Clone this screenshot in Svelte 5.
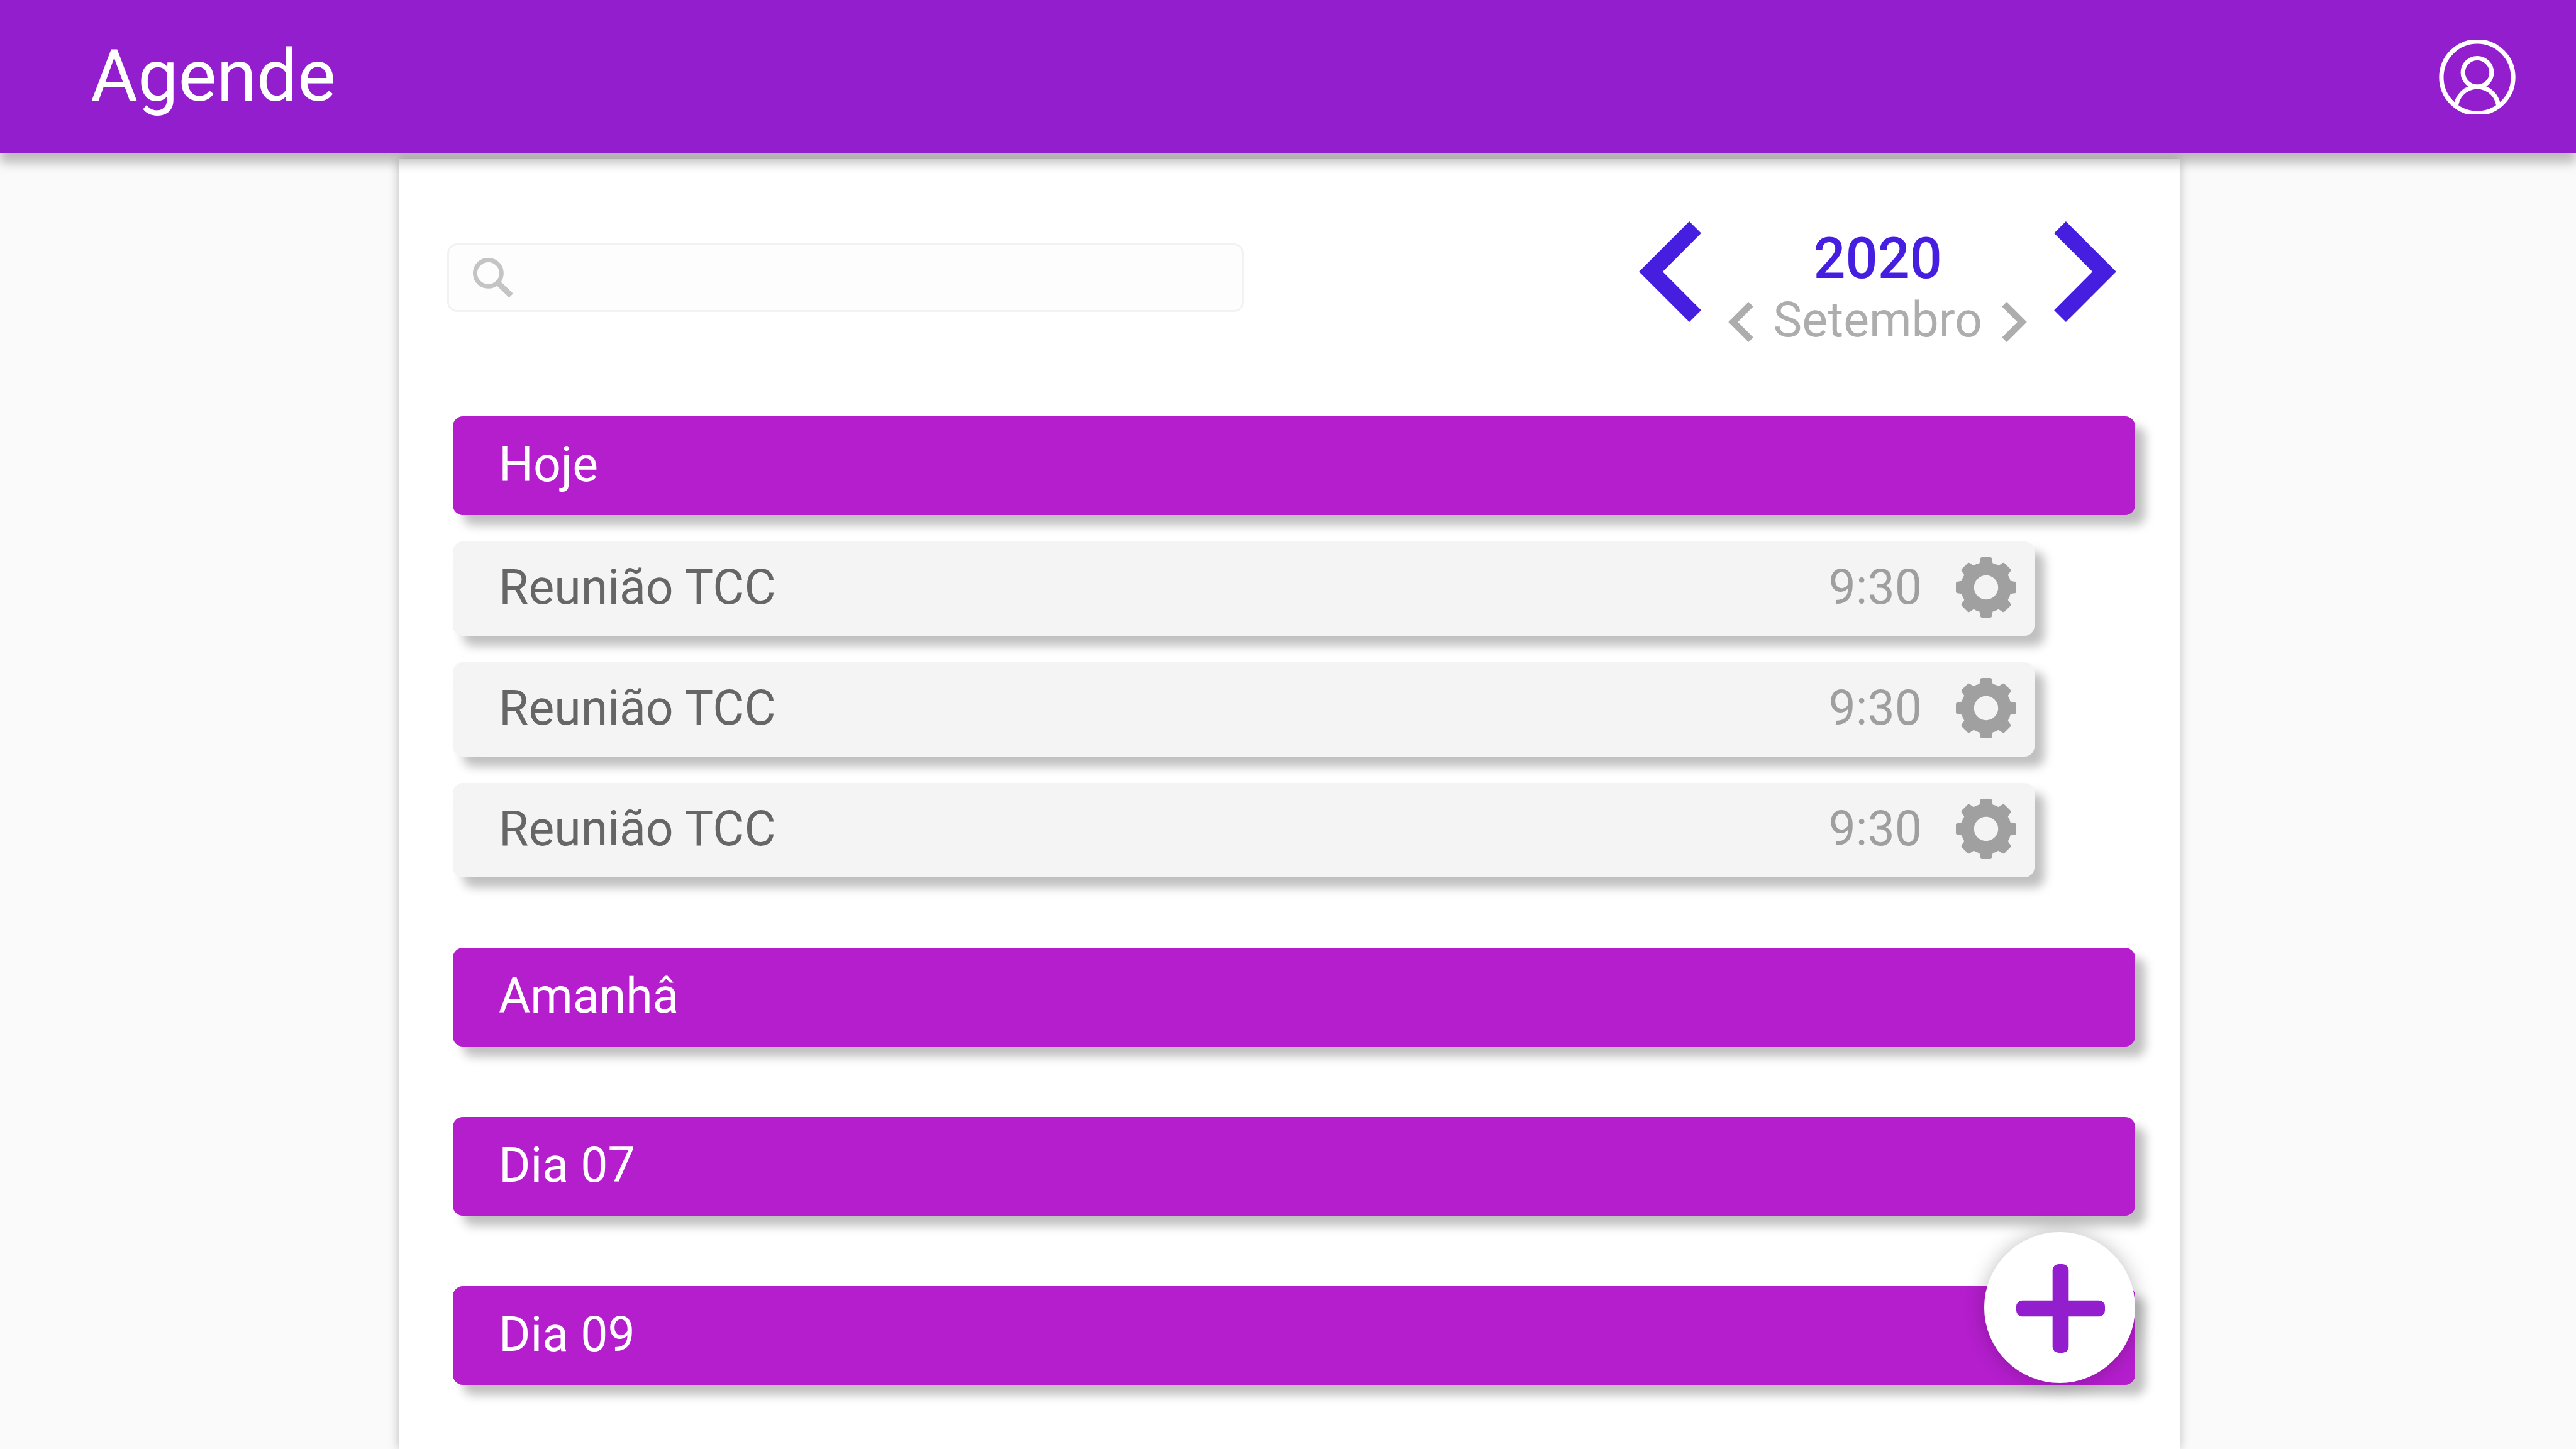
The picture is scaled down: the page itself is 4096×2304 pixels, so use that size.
<script lang="ts">
  const year = 2020;
  const month = 'Setembro';
  const days = [
    {
      label: 'Hoje',
      events: [
        { title: 'Reunião TCC', time: '9:30' },
        { title: 'Reunião TCC', time: '9:30' },
        { title: 'Reunião TCC', time: '9:30' }
      ]
    },
    { label: 'Amanhâ', events: [] },
    { label: 'Dia 07', events: [] },
    { label: 'Dia 09', events: [] }
  ];
  const teeth = [0, 45, 90, 135, 180, 225, 270, 315];
  let query = $state('');
</script>

{#snippet chevron(next: boolean)}
  <svg viewBox="0 0 7.41 12" aria-hidden="true">
    {#if next}
      <path d="M0 10.59 4.58 6 0 1.41 1.41 0l6 6-6 6z" />
    {:else}
      <path d="M7.41 1.41 6 0 0 6l6 6 1.41-1.41L2.83 6z" />
    {/if}
  </svg>
{/snippet}

<div class="page">
  <header class="topbar">
    <h1>Agende</h1>
    <button class="profile" aria-label="Perfil">
      <svg viewBox="0 0 152 148" aria-hidden="true">
        <clipPath id="badge"><circle cx="76" cy="74" r="72" /></clipPath>
        <circle cx="76" cy="74" r="71.6" />
        <circle cx="76" cy="64.3" r="28.6" />
        <circle cx="76" cy="135.3" r="42.4" clip-path="url(#badge)" />
      </svg>
    </button>
  </header>

  <main>
    <section class="panel">
      <div class="toolbar">
        <label class="search">
          <svg viewBox="0 0 80 80" aria-hidden="true">
            <circle cx="30.5" cy="30.5" r="26.2" stroke-width="8.7" />
            <path d="M50 50 76 75" stroke-width="11.2" />
          </svg>
          <input type="search" aria-label="Pesquisar" bind:value={query} />
        </label>

        <nav class="period" aria-label="Período">
          <button class="step year-step" aria-label="Ano anterior">{@render chevron(false)}</button>
          <div class="current">
            <strong>{year}</strong>
            <div class="month">
              <button class="step month-step" aria-label="Mês anterior">{@render chevron(false)}</button>
              <span>{month}</span>
              <button class="step month-step" aria-label="Próximo mês">{@render chevron(true)}</button>
            </div>
          </div>
          <button class="step year-step" aria-label="Próximo ano">{@render chevron(true)}</button>
        </nav>
      </div>

      <div class="days">
        {#each days as day}
          <section class="day">
            <h2>{day.label}</h2>
            {#if day.events.length}
              <ul>
                {#each day.events as event}
                  <li>
                    <span class="title">{event.title}</span>
                    <time>{event.time}</time>
                    <button class="settings" aria-label="Configurar evento">
                      <svg viewBox="0 0 120 120" aria-hidden="true">
                        <circle cx="60" cy="60" r="37" />
                        {#each teeth as angle}
                          <path
                            d="M46.5 14 48.3 4Q48.8 0 52 0H68Q71.2 0 71.7 4L73.5 14Z"
                            transform="rotate({angle} 60 60)"
                          />
                        {/each}
                      </svg>
                    </button>
                  </li>
                {/each}
              </ul>
            {/if}
          </section>
        {/each}
      </div>
    </section>
  </main>

  <button class="add" aria-label="Adicionar evento">
    <svg viewBox="0 0 176 176" aria-hidden="true">
      <rect x="72" width="32" height="176" rx="12" />
      <rect y="72" width="176" height="32" rx="12" />
    </svg>
  </button>
</div>

<style>
  :global(body) {
    margin: 0;
    background: #fafafa;
    font-family: Roboto, sans-serif;
  }

  .page,
  .page * {
    box-sizing: border-box;
  }

  .page {
    display: flex;
    flex-direction: column;
    min-height: 100vh;
  }

  h1,
  h2,
  ul {
    margin: 0;
    padding: 0;
    font-weight: 400;
    list-style: none;
  }

  button {
    flex: none;
    padding: 0;
    border: 0;
    background: none;
    cursor: pointer;
  }

  svg {
    display: block;
    width: 100%;
    height: 100%;
  }

  .topbar {
    position: relative;
    z-index: 1;
    display: flex;
    align-items: center;
    justify-content: space-between;
    height: 243px;
    padding: 2px 96px 0 144px;
    background: #921ecd;
    color: #fff;
    box-shadow: 0 16px 16px rgba(0, 0, 0, 0.25);
  }

  h1 {
    padding-bottom: 4px;
    font-size: 115px;
    line-height: 135px;
  }

  .profile {
    width: 122px;
    height: 118px;
  }

  .profile svg {
    fill: none;
    stroke: #fff;
    stroke-width: 9;
  }

  main {
    display: flex;
    flex: 1;
    padding: 10px 630px 0 634px;
  }

  .panel {
    flex: 1;
    padding-top: 99px;
    background: #fff;
    box-shadow: 0 0 16px rgba(0, 0, 0, 0.25);
  }

  .toolbar {
    display: flex;
    align-items: flex-start;
    justify-content: space-between;
    padding: 0 101px 0 77px;
  }

  .search {
    display: flex;
    align-items: center;
    flex: 0 1 1267px;
    height: 109px;
    margin-top: 35px;
    padding: 0 38px;
    border: 3px solid #f2f2f2;
    border-radius: 16px;
    background: #fdfdfd;
  }

  .search svg {
    flex: none;
    width: 64px;
    height: 64px;
    fill: none;
    stroke: #c4c4c4;
  }

  .search input {
    flex: 1;
    min-width: 0;
    margin-left: 32px;
    border: 0;
    outline: 0;
    background: none;
    color: #666;
    font: 400 58px Roboto, sans-serif;
  }

  .period {
    display: flex;
    align-items: flex-start;
    gap: 43px;
  }

  .step svg {
    fill: currentColor;
  }

  .year-step {
    width: 99px;
    height: 160px;
    color: #451ee0;
  }

  .month-step {
    width: 40px;
    height: 64px;
    color: #adadad;
  }

  .current {
    padding-top: 5px;
    text-align: center;
  }

  .current strong {
    display: block;
    color: #451ee0;
    font-size: 90px;
    font-weight: 500;
    line-height: 109px;
  }

  .month {
    display: flex;
    align-items: center;
    gap: 31px;
    color: #adadad;
    font-size: 77px;
    line-height: 86px;
  }

  .month span {
    padding-bottom: 6px;
  }

  .days {
    display: flex;
    flex-direction: column;
    gap: 112px;
    padding: 104px 71px 102px 86px;
  }

  .day,
  ul {
    display: flex;
    flex-direction: column;
    gap: 42px;
  }

  ul {
    padding-right: 160px;
  }

  h2,
  li {
    display: flex;
    align-items: center;
    border-radius: 16px;
    box-shadow: 16px 16px 16px rgba(0, 0, 0, 0.25);
    font-size: 77px;
    line-height: 90px;
  }

  h2 {
    min-height: 157px;
    padding: 0 73px 4px;
    background: #b41ecd;
    color: #fff;
  }

  li {
    min-height: 150px;
    padding: 0 29px 4px 73px;
    background: #f4f4f4;
    color: #666;
  }

  .title {
    flex: 1;
  }

  time {
    margin-right: 54px;
    color: #9f9f9f;
  }

  .settings {
    width: 96px;
    height: 96px;
  }

  .settings svg {
    fill: #a0a0a0;
  }

  .settings circle {
    fill: none;
    stroke: #a0a0a0;
    stroke-width: 26;
  }

  .add {
    position: fixed;
    right: 701px;
    bottom: 105px;
    display: grid;
    place-items: center;
    width: 240px;
    height: 240px;
    padding: 2px 0 0 2px;
    border-radius: 50%;
    background: #fff;
    box-shadow: 0 0 32px rgba(0, 0, 0, 0.25);
  }

  .add svg {
    width: 141px;
    height: 141px;
    fill: #921ecd;
  }
</style>
